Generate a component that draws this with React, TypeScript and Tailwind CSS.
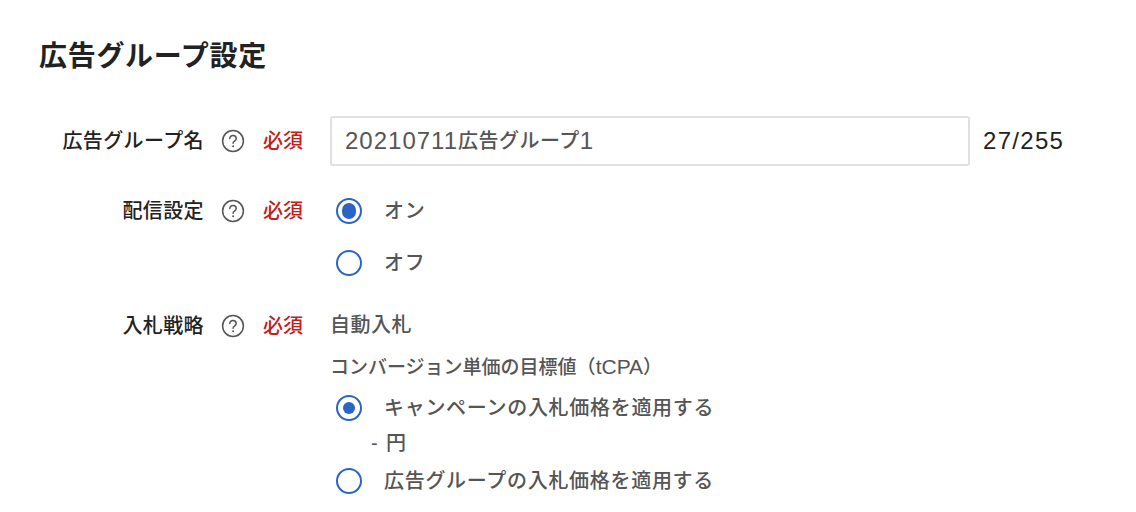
function HelpIcon() {
  return (
    <svg width="24" height="24" viewBox="0 0 24 24" fill="none" className="shrink-0">
      <circle cx="12" cy="12" r="10.4" stroke="#555555" strokeWidth="1.5" />
      <path
        d="M8.8 9.6c0-1.9 1.4-3.1 3.2-3.1s3.2 1.2 3.2 2.9c0 1.3-.7 2-1.7 2.7-.9.6-1.4 1.1-1.4 2.2"
        stroke="#555555"
        strokeWidth="1.5"
        strokeLinecap="round"
      />
      <circle cx="12.1" cy="17.3" r="1" fill="#555555" />
    </svg>
  );
}

function Label({ text }: { text: string }) {
  return (
    <div className="flex h-[50px] w-[330px] shrink-0 items-center">
      <span className="w-[204px] pl-[39px] text-right text-[20px] font-medium leading-none tracking-[0.4px] text-[#222222]">{text}</span>
      <span className="ml-[17px]">
        <HelpIcon />
      </span>
      <span className="ml-[18px] text-[20px] font-medium leading-none text-[#c0211a]">必須</span>
    </div>
  );
}

function Radio({ label, checked, dot = "w-[12px] h-[12px]" }: { label: string; checked?: boolean; dot?: string }) {
  return (
    <div className="flex items-center pl-[6px]">
      <span className="flex h-[26px] w-[26px] items-center justify-center rounded-full border-2 border-[#2b65c4]">
        {checked && <span className={`rounded-full bg-[#2b65c4] ${dot}`} />}
      </span>
      <span className="ml-[22px] text-[20px] font-medium leading-none tracking-[0.7px] text-[#555555]">{label}</span>
    </div>
  );
}

export default function App() {
  return (
    <div className="h-[512px] w-[1136px] overflow-hidden bg-white font-['Liberation_Sans','Noto_Sans_CJK_JP',sans-serif]">
      <h1 className="pl-[39px] pt-[39px] text-[28px] font-bold leading-[36px] tracking-[0.7px] text-[#222222]">広告グループ設定</h1>

      {/* name */}
      <div className="mt-[41px] flex items-center">
        <Label text="広告グループ名" />
        <div className="flex h-[50px] w-[640px] items-center rounded-[3px] border-2 border-[#e0e0e0] pl-[13px] text-[20px] leading-none text-[#555555]">
          <span className="text-[24px] tracking-[1px]">20210711</span>
          <span className="font-medium tracking-[0.5px]">広告グループ</span>
          <span className="text-[24px]">1</span>
        </div>
        <span className="ml-[13px] text-[24px] leading-none tracking-[1.3px] text-[#222222]">27/255</span>
      </div>

      {/* delivery */}
      <div className="mt-[30px] flex">
        <div className="-mt-[10px]">
          <Label text="配信設定" />
        </div>
        <div className="flex flex-col gap-[26px] pt-[2px]">
          <Radio label="オン" checked dot="h-[16px] w-[14px]" />
          <Radio label="オフ" />
        </div>
      </div>

      {/* bidding */}
      <div className="mt-[35px] flex">
        <div className="-mt-[10px]">
          <Label text="入札戦略" />
        </div>
        <div className="flex flex-col">
          <p className="pt-[4px] text-[20px] font-medium leading-none tracking-[0.5px] text-[#555555]">自動入札</p>
          <p className="mt-[21px] text-[19px] font-medium leading-none text-[#555555]">
            コンバージョン単価の目標値（<span className="text-[21px] font-normal">tCPA</span>）
          </p>
          <div className="mt-[18px]">
            <Radio label="キャンペーンの入札価格を適用する" checked />
          </div>
          <p className="mt-[12px] pl-[41px] text-[20px] font-medium leading-none tracking-[1.4px] text-[#555555]">- 円</p>
          <div className="mt-[15px]">
            <Radio label="広告グループの入札価格を適用する" />
          </div>
        </div>
      </div>
    </div>
  );
}
